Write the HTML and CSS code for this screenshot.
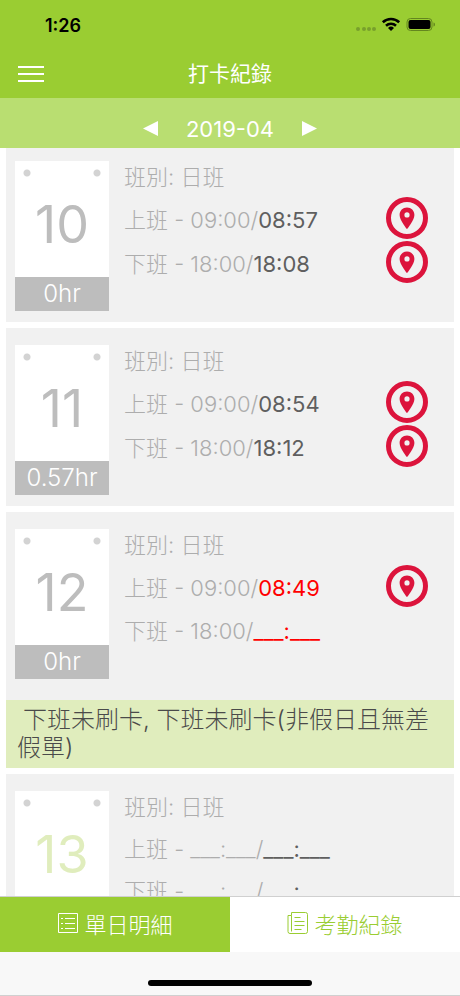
FILE: index.html
```html
<!DOCTYPE html>
<html lang="zh-Hant">
<head>
  <meta charset="UTF-8">
  <meta name="viewport" content="width=device-width, initial-scale=1.0">
  <title>打卡紀錄</title>
  <link rel="stylesheet" href="styles.css">
</head>
<body>
  <!-- shared shapes -->
  <svg width="0" height="0" class="defs">
    <symbol id="pin" viewBox="0 0 42 42">
      <circle cx="21" cy="21" r="18.5" fill="none" stroke="currentColor" stroke-width="5"/>
      <path fill="currentColor" fill-rule="evenodd" d="M21 10.5c-4.2 0-7.4 3.2-7.4 7.4 0 5.4 7.4 14.1 7.4 14.1s7.4-8.7 7.4-14.1c0-4.2-3.2-7.4-7.4-7.4zm0 4.8a2.6 2.6 0 1 1 0 5.2 2.6 2.6 0 0 1 0-5.2z"/>
    </symbol>
  </svg>

  <div class="screen">
    <div class="status">
      <span class="clock">1:26</span>
      <svg class="status-icons" width="82" height="16" viewBox="0 0 82 16">
        <g fill="#78a02c">
          <circle cx="3" cy="12" r="2"/>
          <circle cx="9" cy="12" r="2"/>
          <circle cx="14" cy="12" r="2"/>
          <circle cx="19" cy="12" r="2"/>
        </g>
        <g fill="none" stroke="#000" stroke-width="2.6">
          <path d="M27.8 5.3a12 12 0 0 1 16.4 0"/>
          <path d="M31 8.7a7.3 7.3 0 0 1 10 0"/>
        </g>
        <path d="M36 14l-3-3a4.4 4.4 0 0 1 6 0z"/>
        <rect x="52" y="1.5" width="25" height="12" rx="3.5" fill="none" stroke="#64861f"/>
        <rect x="53.5" y="3" width="22" height="9" rx="2"/>
        <path d="M78.5 5.5c2 .5 2 3.5 0 4z" fill="#64861f"/>
      </svg>
    </div>

    <header class="header">
      <button class="menu" aria-label="選單"><span></span><span></span><span></span></button>
      <h1>打卡紀錄</h1>
    </header>

    <div class="month">
      <button aria-label="上個月"><svg width="15" height="16" viewBox="0 0 15 16"><path d="M15 0v15L0 7.5z" fill="#fff"/></svg></button>
      <span>2019-04</span>
      <button aria-label="下個月"><svg width="15" height="16" viewBox="0 0 15 16"><path d="M0 0v15l15-7.5z" fill="#fff"/></svg></button>
    </div>

    <main class="list">
      <section class="record">
        <div class="record-main">
          <div class="calendar">
            <div class="day">10</div>
            <div class="hours">0hr</div>
          </div>
          <div class="detail">
            <p>班別: 日班</p>
            <p class="located"><span>上班 - 09:00/<b>08:57</b></span><button class="pin" aria-label="上班地點"><svg><use href="#pin"/></svg></button></p>
            <p class="located"><span>下班 - 18:00/<b>18:08</b></span><button class="pin" aria-label="下班地點"><svg><use href="#pin"/></svg></button></p>
          </div>
        </div>
      </section>

      <section class="record">
        <div class="record-main">
          <div class="calendar">
            <div class="day">11</div>
            <div class="hours">0.57hr</div>
          </div>
          <div class="detail">
            <p>班別: 日班</p>
            <p class="located"><span>上班 - 09:00/<b>08:54</b></span><button class="pin" aria-label="上班地點"><svg><use href="#pin"/></svg></button></p>
            <p class="located"><span>下班 - 18:00/<b>18:12</b></span><button class="pin" aria-label="下班地點"><svg><use href="#pin"/></svg></button></p>
          </div>
        </div>
      </section>

      <section class="record">
        <div class="record-main">
          <div class="calendar">
            <div class="day">12</div>
            <div class="hours">0hr</div>
          </div>
          <div class="detail">
            <p>班別: 日班</p>
            <p class="located"><span>上班 - 09:00/<b class="error">08:49</b></span><button class="pin" aria-label="上班地點"><svg><use href="#pin"/></svg></button></p>
            <p><span>下班 - 18:00/<b class="error">___:___</b></span></p>
          </div>
        </div>
        <div class="notice">下班未刷卡, 下班未刷卡(非假日且無差假單)</div>
      </section>

      <section class="record">
        <div class="record-main">
          <div class="calendar">
            <div class="day holiday">13</div>
            <div class="hours">0hr</div>
          </div>
          <div class="detail">
            <p>班別: 日班</p>
            <p><span>上班 - ___:___/<b>___:___</b></span></p>
            <p><span>下班 - ___:___/<b>___:___</b></span></p>
          </div>
        </div>
      </section>
    </main>

    <nav class="tabs">
      <a href="#daily" class="active">
        <svg width="22" height="22" viewBox="0 0 22 22" fill="none" stroke="currentColor">
          <path d="M1.5 1.5h19v19h-19zM8 6.5h10M8 11.5h10M8 16.5h10M4 6.5h2M4 11.5h2M4 16.5h2"/>
        </svg>
        單日明細
      </a>
      <a href="#attendance">
        <svg width="22" height="22" viewBox="0 0 22 22" fill="none" stroke="currentColor">
          <path d="M4.5 .5h14a2 2 0 0 1 2 2v17a2 2 0 0 1-2 2H3a2 2 0 0 1-2-2v-16h3.5zM4.5 3.5v16M7.5 5.5h6M7.5 9.5h10M7.5 13.5h10M7.5 17.5h7"/>
        </svg>
        考勤紀錄
      </a>
    </nav>
    <div class="home"><span></span></div>
  </div>
</body>
</html>
```

FILE: styles.css
```css
* {
  box-sizing: border-box;
}

body {
  margin: 0;
  font-family: Inter, "Noto Sans CJK TC", sans-serif;
  font-weight: 300;
  background-color: #fff;
}

button {
  padding: 0;
  border: none;
  background: none;
  cursor: pointer;
}

svg {
  display: block;
}

.defs {
  position: absolute;
}

.screen {
  display: flex;
  flex-direction: column;
  height: 100vh;
  overflow: hidden;
}

/* top bars */
.status {
  display: flex;
  flex-shrink: 0;
  justify-content: space-between;
  align-items: center;
  height: 50px;
  padding: 0 23px 0 45px;
  background-color: #9acd32;
}

.clock {
  font-size: 18px;
  font-weight: 600;
}

.header {
  display: grid;
  flex-shrink: 0;
  grid-template-columns: 1fr auto 1fr;
  align-items: center;
  height: 48px;
  padding: 0 18px;
  color: #fff;
  background-color: #9acd32;
}

.header h1 {
  margin: 0;
  padding-bottom: 4px;
  font-size: 21px;
  font-weight: 400;
}

.menu {
  display: flex;
  flex-direction: column;
  gap: 5px;
  width: 26px;
}

.menu span {
  height: 2px;
  background-color: #fff;
}

.month {
  display: flex;
  flex-shrink: 0;
  justify-content: center;
  align-items: center;
  gap: 28px;
  height: 50px;
  padding-top: 12px;
  font-size: 22px;
  font-weight: 400;
  color: #fff;
  background-color: #b9de71;
}

/* records */
.list {
  flex: 1;
  min-height: 0;
  padding: 0 6px;
  overflow-y: auto;
  scrollbar-width: none;
}

.record {
  margin-bottom: 6px;
  background-color: #f1f1f1;
}

.record-main {
  display: flex;
  gap: 15px;
  padding: 11px 26px 11px 9px;
}

.record:first-child .record-main {
  padding-top: 7px;
}

.calendar {
  display: flex;
  flex-direction: column;
  width: 94px;
  height: 150px;
  margin-top: 6px;
  background-color: #fff;
  background-image: radial-gradient(circle at 12px 12px, #d3d3d3 3px, transparent 4px),
    radial-gradient(circle at 82px 12px, #d3d3d3 3px, transparent 4px);
}

.day {
  display: flex;
  flex: 1;
  justify-content: center;
  align-items: center;
  padding-top: 10px;
  font-size: 52px;
  font-weight: 400;
  color: #bdbdbd;
}

.day.holiday {
  color: #e0edbd;
}

.hours {
  height: 34px;
  font-size: 24px;
  line-height: 34px;
  text-align: center;
  color: #fff;
  background-color: #bdbdbd;
}

.detail {
  flex: 1;
  font-size: 22px;
  color: #adadad;
}

.detail p {
  display: flex;
  align-items: center;
  height: 42px;
  margin: 0;
  padding-bottom: 3px;
  white-space: nowrap;
}

.detail .located {
  height: 44px;
}

.detail b {
  font-weight: 400;
  color: #5f5f5f;
}

.detail .error {
  color: #f00;
}

.pin {
  width: 42px;
  height: 42px;
  margin-left: auto;
  color: #dc143c;
}

.pin svg {
  width: 42px;
  height: 42px;
}

.notice {
  margin-top: 10px;
  padding: 6px 11px;
  font-size: 24px;
  line-height: 28px;
  text-indent: 6px;
  color: #4a4a4a;
  background-color: #e0edbd;
}

/* bottom tabs */
.tabs {
  display: flex;
  flex-shrink: 0;
  height: 56px;
  border-top: 1px solid #d0d0d0;
}

.tabs a {
  display: flex;
  flex: 1;
  justify-content: center;
  align-items: center;
  gap: 5px;
  padding-bottom: 4px;
  font-size: 22px;
  color: #9acd32;
  text-decoration: none;
}

.tabs .active {
  color: #fff;
  background-color: #9acd32;
}

.home {
  display: flex;
  flex-shrink: 0;
  justify-content: center;
  align-items: flex-end;
  height: 44px;
  padding-bottom: 9px;
  border-bottom: 1px solid #d0d0d0;
  background-color: #f8f8f8;
}

.home span {
  width: 164px;
  height: 6px;
  border-radius: 3px;
  background-color: #000;
}
```
